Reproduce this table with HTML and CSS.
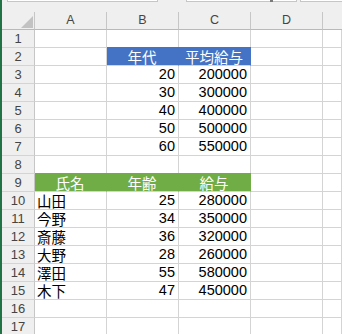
FILE: index.html
```html
<!DOCTYPE html>
<html lang="ja">
<head>
<meta charset="utf-8">
<title>Sheet1</title>
<link rel="stylesheet" href="styles.css">
</head>
<body>
<div class="app">
  <div class="toolbar">
    <div class="box box-name"></div>
    <div class="box box-formula"><span class="grip"></span></div>
    <div class="box box-rest"></div>
  </div>
  <div class="sheet">
    <div class="hd corner"><span class="tri"></span></div>
    <div class="hd col">A</div>
    <div class="hd col">B</div>
    <div class="hd col">C</div>
    <div class="hd col">D</div>
    <div class="hd col last"></div>

    <div class="rh">1</div><div class="c"></div><div class="c"></div><div class="c"></div><div class="c"></div><div class="c"></div>
    <div class="rh">2</div><div class="c"></div><div class="c blue ctr">年代</div><div class="c blue ctr">平均給与</div><div class="c"></div><div class="c"></div>
    <div class="rh">3</div><div class="c"></div><div class="c num">20</div><div class="c num">200000</div><div class="c"></div><div class="c"></div>
    <div class="rh">4</div><div class="c"></div><div class="c num">30</div><div class="c num">300000</div><div class="c"></div><div class="c"></div>
    <div class="rh">5</div><div class="c"></div><div class="c num">40</div><div class="c num">400000</div><div class="c"></div><div class="c"></div>
    <div class="rh">6</div><div class="c"></div><div class="c num">50</div><div class="c num">500000</div><div class="c"></div><div class="c"></div>
    <div class="rh">7</div><div class="c"></div><div class="c num">60</div><div class="c num">550000</div><div class="c"></div><div class="c"></div>
    <div class="rh">8</div><div class="c"></div><div class="c"></div><div class="c"></div><div class="c"></div><div class="c"></div>
    <div class="rh">9</div><div class="c green ctr">氏名</div><div class="c green ctr">年齢</div><div class="c green ctr">給与</div><div class="c"></div><div class="c"></div>
    <div class="rh">10</div><div class="c">山田</div><div class="c num">25</div><div class="c num">280000</div><div class="c"></div><div class="c"></div>
    <div class="rh">11</div><div class="c">今野</div><div class="c num">34</div><div class="c num">350000</div><div class="c"></div><div class="c"></div>
    <div class="rh">12</div><div class="c">斎藤</div><div class="c num">36</div><div class="c num">320000</div><div class="c"></div><div class="c"></div>
    <div class="rh">13</div><div class="c">大野</div><div class="c num">28</div><div class="c num">260000</div><div class="c"></div><div class="c"></div>
    <div class="rh">14</div><div class="c">澤田</div><div class="c num">55</div><div class="c num">580000</div><div class="c"></div><div class="c"></div>
    <div class="rh">15</div><div class="c">木下</div><div class="c num">47</div><div class="c num">450000</div><div class="c"></div><div class="c"></div>
    <div class="rh">16</div><div class="c"></div><div class="c"></div><div class="c"></div><div class="c"></div><div class="c"></div>
    <div class="rh">17</div><div class="c"></div><div class="c"></div><div class="c"></div><div class="c"></div><div class="c"></div>
  </div>
</div>
</body>
</html>
```

FILE: styles.css
```css
html, body {
  margin: 0;
  padding: 0;
  background: #ffffff;
}

.app {
  width: 342px;
  height: 334px;
  overflow: hidden;
  border-left: 2px solid #217346;
  box-sizing: border-box;
  background: #ffffff;
  font-family: "Noto Sans CJK JP", "Liberation Sans", sans-serif;
}

/* formula bar strip above the grid */
.toolbar {
  display: flex;
  height: 12px;
  background: #efefef;
}

.box {
  position: relative;
  height: 2px;
  box-sizing: border-box;
  background: #ffffff;
  border: 1px solid #c6c6c6;
  border-top: 0;
}

.box-name {
  margin-left: 5px;
  width: 151px;
}

.box-formula {
  margin-left: 28px;
  width: 111px;
}

.box-rest {
  margin-left: 3px;
  flex: 1;
  border-right: 0;
}

.grip {
  position: absolute;
  left: 83px;
  bottom: -1px;
  width: 3px;
  height: 2px;
  background: #7a7a7a;
}

/* worksheet grid */
.sheet {
  display: grid;
  grid-template-columns: 33px 72px 72px 72px 72px 1fr;
  grid-auto-rows: 18px;
}

.sheet > div {
  box-sizing: border-box;
  white-space: nowrap;
}

.hd {
  background: #efefef;
  border-right: 1px solid #c6c6c6;
  border-bottom: 1px solid #b9b9b9;
  color: #444444;
  font-family: "Liberation Sans", sans-serif;
  font-size: 12.5px;
  line-height: 17px;
  text-align: center;
}

.hd.last {
  border-right: 0;
}

.corner {
  display: flex;
  justify-content: flex-end;
  align-items: flex-end;
  padding: 0 1px 1px 0;
}

.tri {
  display: block;
  width: 12px;
  height: 12px;
  background: #c2c2c2;
  clip-path: polygon(100% 0, 100% 100%, 0 100%);
}

.rh {
  background: #efefef;
  border-right: 1px solid #c6c6c6;
  border-bottom: 1px solid #d4d4d4;
  color: #444444;
  font-family: "Liberation Sans", sans-serif;
  font-size: 13px;
  line-height: 17px;
  text-align: center;
}

.c {
  border-right: 1px solid #d4d4d4;
  border-bottom: 1px solid #d4d4d4;
  padding: 0 3px 0 2px;
  color: #000000;
  font-size: 14.5px;
  line-height: 17px;
}

.num {
  font-family: "Liberation Sans", sans-serif;
  text-align: right;
}

.ctr {
  text-align: center;
  color: #ffffff;
}

/* filled cells hide the gridline above and to the right */
.blue {
  background: #4472c4;
  border-right-color: #4472c4;
  box-shadow: 0 -1px 0 #4472c4;
}

.green {
  background: #70ad47;
  border-right-color: #70ad47;
  box-shadow: 0 -1px 0 #70ad47;
}
```
